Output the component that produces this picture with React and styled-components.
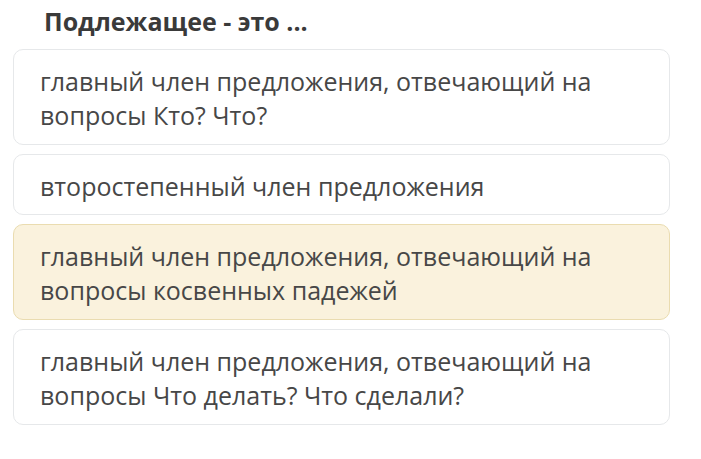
import styled, { createGlobalStyle } from 'styled-components'

const GlobalStyle = createGlobalStyle`
  body {
    margin: 0;
    background: #ffffff;
    font-family: 'Open Sans', 'Noto Sans', sans-serif;
  }
`

const answers = [
  { text: 'главный член предложения, отвечающий на вопросы Кто? Что?' },
  { text: 'второстепенный член предложения' },
  { text: 'главный член предложения, отвечающий на вопросы косвенных падежей', selected: true },
  { text: 'главный член предложения, отвечающий на вопросы Что делать? Что сделали?' },
]

const Page = styled.div`
  width: 701px;
  height: 459px;
  padding: 4px 31px 0 13px;
  box-sizing: border-box;
`

const Question = styled.h2`
  margin: 0 0 11px 31px;
  font-size: 25px;
  line-height: 34px;
  font-weight: 700;
  color: #3a3a3a;
`

const List = styled.div`
  display: flex;
  flex-direction: column;
  gap: 9px;
`

const Answer = styled.div`
  box-sizing: border-box;
  height: ${(p) => (p.$short ? '61px' : '96px')};
  display: flex;
  align-items: center;
  padding: 2px 26px 0;
  border-radius: 10px;
  border: 1px solid ${(p) => (p.$selected ? '#eadcb0' : '#e6e8ea')};
  background: ${(p) => (p.$selected ? '#faf2dd' : '#ffffff')};
  font-size: 25px;
  line-height: 34px;
  color: #474747;
`

export default function App() {
  return (
    <Page>
      <GlobalStyle />
      <Question>Подлежащее - это ...</Question>
      <List>
        {answers.map((a, i) => (
          <Answer key={i} $selected={a.selected} $short={a.text.length < 40}>
            {a.text}
          </Answer>
        ))}
      </List>
    </Page>
  )
}
